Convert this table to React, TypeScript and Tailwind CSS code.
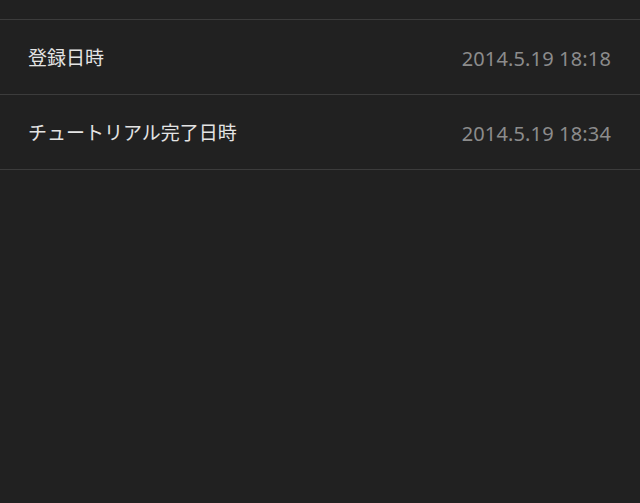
import React from 'react';

const rows = [
  { label: '登録日時', value: '2014.5.19 18:18' },
  { label: 'チュートリアル完了日時', value: '2014.5.19 18:34' },
];

export default function App() {
  return (
    <div
      className="w-[640px] h-[503px] bg-[#212121] overflow-hidden"
      style={{ fontFamily: '"Noto Sans", "Noto Sans CJK JP", sans-serif' }}
    >
      <div className="h-[19px]" />
      <div className="border-t border-[#3c3c3c]">
        {rows.map((row) => (
          <div
            key={row.label}
            className="h-[75px] flex items-center justify-between pl-[28px] pr-[29px] pt-[3px] border-b border-[#3c3c3c]"
          >
            <span className="text-[19px] text-[#e4e4e4]">{row.label}</span>
            <span className="text-[20px] text-[#8c8c8c] tracking-[0.15px]">{row.value}</span>
          </div>
        ))}
      </div>
    </div>
  );
}
